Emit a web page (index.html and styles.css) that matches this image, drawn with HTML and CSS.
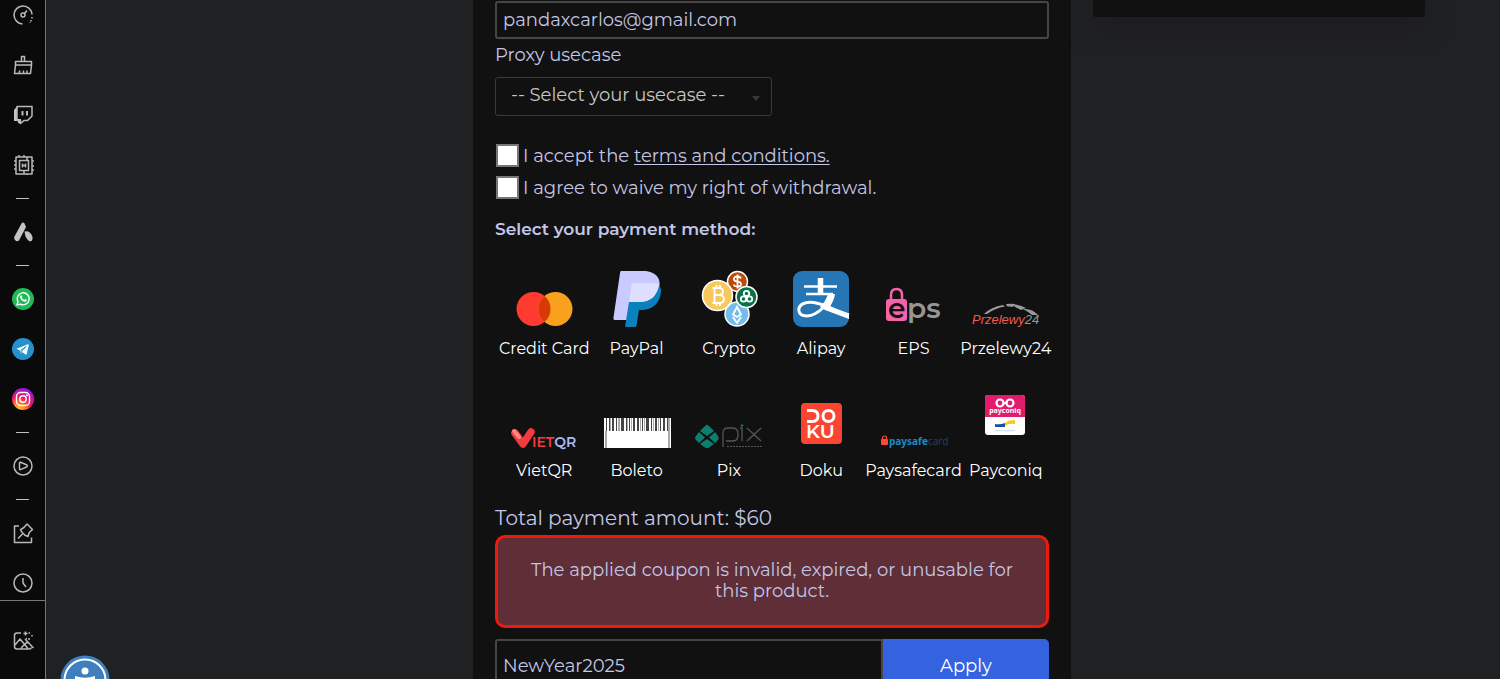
FILE: index.html
```html
<!DOCTYPE html>
<html lang="en">
<head>
<meta charset="utf-8">
<title>Checkout</title>
<link rel="stylesheet" href="styles.css">
</head>
<body>
<div class="app">
  <aside class="sidebar">
    <nav class="sidebar-list" aria-label="Browser tools">
      <button class="tool" aria-label="Speed"><svg viewBox="0 0 22 22"><path d="M10.500 20A9 9 0 1 1 20 10.500M20 13v1.500M19 16v1.500M18 18.500v.5M12.500 9.500 15 6.500"/><circle cx="11" cy="11" r="2"/></svg></button>
      <button class="tool" aria-label="Cleaner"><svg viewBox="0 0 22 22"><path d="M9.500 7V2.500h3V7M3.500 11V7.500h16V11M3.500 11h16L18.500 19.500h-16zM7 19.500l.8-3M11.500 19.500v-3M15 19.500v-3"/></svg></button>
      <button class="tool" aria-label="Twitch"><svg viewBox="0 0 22 22"><path class="fill" d="M2 6l3-3.500V15h4v5l-3-1v-2H2z"/><path d="M5 2.500h15V12l-4.500 4.500H12L8.500 19.500v-3H5z"/><path class="thick" d="M10.500 7v4.500M15 7v4.500"/></svg></button>
      <button class="tool" aria-label="Limiter"><svg viewBox="0 0 22 22"><path d="M4 3h16v17H4zM7.500 6.500h9v10h-9zM7 3V1M12 3V1M15 3v3.500M4 7H2M4 11H2M4 15H2M20 7h2M20 12h2M20 16h2M12 16.500V20M15 20v1"/><path d="M10.500 9.500v4M13.500 9.500v4M10.500 11.500h3"/></svg></button>
      <span class="dash"></span>
      <button class="tool" aria-label="Aria"><svg viewBox="0 0 22 22"><path class="fill" d="M9.500 2.500Q11 .5 12.500 2.500L14 6 7 19.500Q3.500 22 2 16.500z"/><path class="fill" d="M12.500 10.500q6-1 8 5.500.5 4-2.500 4.500-2.500-1-4.500-5z"/></svg></button>
      <span class="dash"></span>
      <button class="tool" aria-label="WhatsApp"><svg viewBox="0 0 22 22"><circle class="wa" cx="11" cy="11" r="11"/><path class="white-line" d="m5 17 .9-3.300a6 6 0 1 1 2.400 2.400z"/><path class="white" d="M8.500 7.500q1-1 1.800 1l-.5 1.200q.8 1.500 2.400 2.200l1-1q2 .6 1.500 1.800-1.200 1.600-3.300.6Q8.500 12 7.900 9.500q-.1-1.300.6-2"/></svg></button>
      <button class="tool" aria-label="Telegram"><svg viewBox="0 0 22 22"><circle class="tg" cx="11" cy="11" r="11"/><path class="white" d="m4.500 10.800 11.500-4.500q.9-.2.7.9l-2 9q-.4.800-1.200.3l-3-2.200-1.700 1.600-.6-3.200z"/><path class="tg-line" d="m8.500 12.500 5.500-4-4.200 4.500-.8 2.700"/></svg></button>
      <button class="tool" aria-label="Instagram"><svg viewBox="0 0 22 22"><defs><radialGradient id="ig" cx=".3" cy="1" r="1.050"><stop offset="0" stop-color="#ffd43b"/><stop offset=".3" stop-color="#ff7a22"/><stop offset=".58" stop-color="#ee1668"/><stop offset="1" stop-color="#8b16e8"/></radialGradient></defs><circle class="plain" fill="url(#ig)" cx="11" cy="11" r="11"/><rect class="white-line" x="4.500" y="4.500" width="13" height="13" rx="4"/><circle class="white-line" cx="11" cy="11" r="3.200"/><circle class="white" cx="15" cy="7.200" r="1"/></svg></button>
      <span class="dash"></span>
      <button class="tool" aria-label="Player"><svg viewBox="0 0 22 22"><circle cx="11" cy="11" r="9"/><path d="M7.500 8q0-1 1-.8l6 2.500q1.600 1.200 0 2.300l-6 2.600q-1 .2-1-1z"/></svg></button>
      <span class="dash"></span>
      <button class="tool" aria-label="Pinboards"><svg viewBox="0 0 22 22"><path d="M7 4H2.500v16.500h17v-5M12 5.500l3-3.500 5.500 5.500-3.300 3-1.200 4-3-1.200-3-3-1.500-2.600zM10.500 12 6 16.500"/></svg></button>
      <button class="tool" aria-label="History"><svg viewBox="0 0 22 22"><circle cx="11" cy="11" r="9"/><path d="M11 6v5l3 4"/></svg></button>
    </nav>
    <div class="sidebar-foot">
      <button class="tool" aria-label="Wallpaper"><svg viewBox="0 0 22 22"><path d="M9 3H5Q2.500 3 2.500 5.500v11Q2.500 19 5 19h12q2 0 2.500-1.500M16.500 3h1.500M20 5v1.500M13.500 1.500v4M11.500 3.500h4M17 8v2M14 8.500h1M3 15l5-6 8 9.500M9 18l5-5 2-1M13 9l8.500 9"/></svg></button>
    </div>
  </aside>

  <main class="page">
    <form class="checkout">
      <input class="field email" type="email" aria-label="Email" value="pandaxcarlos@gmail.com">
      <label class="label" for="usecase">Proxy usecase</label>
      <div class="select-wrap">
        <select class="select" id="usecase"><option>-- Select your usecase --</option></select>
      </div>

      <div class="checks">
        <div class="check"><input type="checkbox" id="terms"><label for="terms">I accept the <a href="#terms">terms and conditions.</a></label></div>
        <div class="check"><input type="checkbox" id="waive"><label for="waive">I agree to waive my right of withdrawal.</label></div>
      </div>

      <h2 class="heading">Select your payment method:</h2>
      <div class="methods">
        <button type="button" class="method">
          <svg viewBox="0 0 68 56"><circle cx="23.500" cy="38" r="17" fill="#ff3b31"/><circle cx="45.500" cy="38" r="17" fill="#f9a01e"/><path d="M34.500 25a17 17 0 0 1 0 26 17 17 0 0 1 0-26" fill="#d83a05"/></svg>
          <span>Credit Card</span></button>
        <button type="button" class="method">
          <svg viewBox="0 0 68 56"><path d="M18 0h22c12 0 19 7 16 17-2 9-9 14-19 14h-7l-3 18H12q-2 0-1.500-2.500L17 2q.3-2 1-2" fill="#c9caff"/><path d="M56 14q3 4 1.500 10c-2 10-10 15-19 15H36l-2.500 15.500Q33 56 31.500 56H23q-1 0-.8-1.500L26 31h11c10 0 17-6 19-17" fill="#0a80bd"/><path d="M30 12h15c6 0 11 0 11 2-2 11-9 17-19 17H26l2.500-17q.3-2 1.500-2" fill="#dedfff"/></svg>
          <span>PayPal</span></button>
        <button type="button" class="method">
          <svg viewBox="0 0 68 56"><g stroke="#fff" stroke-width="1.500"><circle cx="42" cy="43" r="12" fill="#74bdea"/><circle cx="42.500" cy="10.500" r="10" fill="#b94b0b"/><circle cx="51.500" cy="26" r="10.500" fill="#087346"/><circle cx="22.500" cy="24.500" r="15" fill="#f8c85c"/></g><g fill="none" stroke="#fff" stroke-width="1.800"><path d="M46 7.500q-1-2-3.500-2-4 .3-3.500 3 .5 2 3.500 2.200 4 .3 3.500 3-.5 2-3.500 2-3 0-4-2M42.500 3.500v14"/><circle cx="51.500" cy="22.500" r="2.700"/><circle cx="48.500" cy="28" r="2.700"/><circle cx="54.500" cy="28" r="2.700"/><path d="M17.500 17h7q3.500.3 3.500 3.500t-3.500 3.500h-5 5q4.500.3 4.500 4T25 32h-7.500M19.500 17v15M21.500 14v3M25 14v3M21.500 32v3M25 32v3"/><path d="m42 36-4 7.500 4 2.500 4-2.500zM38 46l4 6 4-6"/></g></svg>
          <span>Crypto</span></button>
        <button type="button" class="method">
          <svg viewBox="0 0 68 56"><rect x="6" width="56" height="56" rx="9" fill="#2676b5"/><g fill="none" stroke="#fff"><path d="M17 15.500h33M19 23h27" stroke-width="2.500"/><path d="M33.500 7v16" stroke-width="5.500"/><path d="M44 23c-3 11-13 21-24 22-10 0-11-10-2-13 11-3 24 5 44 12" stroke-width="3"/></g><path d="M41 23h7q-1 7-6 14l20 6v5l-24-9-5-3q6-6 8-13" fill="#fff"/></svg>
          <span>Alipay</span></button>
        <button type="button" class="method">
          <svg viewBox="0 0 68 56"><path d="M11 28v-4q0-6 5.500-6t5.500 6v4" fill="none" stroke="#f763aa" stroke-width="2.500"/><rect x="6" y="28" width="21" height="22" rx="3" fill="#f763aa"/><text x="8" y="47" class="logo-eps dark">e</text><text x="27" y="47" class="logo-eps grey">ps</text></svg>
          <span>EPS</span></button>
        <button type="button" class="method">
          <svg viewBox="0 0 68 56"><path d="M12 43q7-7 19-9l2 1.500Q23 37 15 43zM34 33q5-.7 9 0l-2 3-6-.8zM41 33q8 1 13 4l-5 2-6-3zM51 38q9-1 15 6h-6q-5-4-9-6" fill="#9a9a9a"/><text x="0" y="53" class="logo-p24">Przelewy<tspan class="grey">24</tspan></text></svg>
          <span>Przelewy24</span></button>
        <button type="button" class="method">
          <svg viewBox="0 0 68 56"><path d="m5 40 8 11 8-12" fill="none" stroke="#f23b3d" stroke-width="7.500" stroke-linecap="round" stroke-linejoin="round"/><path d="m4 38 5 6" stroke="#ff8780" stroke-width="4" stroke-linecap="round"/><text x="22" y="54" class="logo-viet">IET<tspan fill="#a9b9f5">QR</tspan></text></svg>
          <span>VietQR</span></button>
        <button type="button" class="method">
          <svg viewBox="0 0 68 56" shape-rendering="crispEdges"><path fill="#fff" d="M1 25h67v30H1z"/><path fill="#444" d="M3 25h1v13H3zM6 25h1v13H6zM9 25h2v13H9zM13 25h1v13h-1zM18 25h3v13h-3zM23 25h1v13h-1zM26 25h1v13h-1zM30 25h2v13h-2zM34 25h2v13h-2zM39 25h1v13h-1zM43 25h3v13h-3zM48 25h1v13h-1zM52 25h2v13h-2zM57 25h1v13h-1zM60 25h2v13h-2zM64 25h1v13h-1z"/><path fill="#aaa" d="M2 38h2v17H2zM65 25h2v30h-2zM7 25h1v13H7zM15 25h2v13h-2zM24 25h1v13h-1zM28 25h1v13h-1zM37 25h1v13h-1zM41 25h1v13h-1zM50 25h1v13h-1zM55 25h1v13h-1z"/></svg>
          <span>Boleto</span></button>
        <button type="button" class="method">
          <svg viewBox="0 0 68 56"><g fill="#0b8070"><path d="m9 34 3-2.500 3 2.500 4 4-7 5-7-5zM4 39l6 5.500L4 50l-3-3q-2-2 0-4zM20 39l-6 5.500 6 5.500 3-3q1.500-2 0-4zM12 46l7 5-5 3.500q-2 1.500-4 0L5 51z"/></g><g fill="none" stroke="#555" stroke-width="1.300"><path d="M28 54V40q0-5 5-5h5q5 0 5 6v1q0 6-5 6h-7M45 35h2v13M52 35l14 13M66 35 52 48"/><path d="M32 53.500h35" stroke-dasharray="2 1" stroke-width="1"/></g><path d="m47 31 1.500 1.500L47 34l-1.500-1.500z" fill="#0b8070"/></svg>
          <span>Pix</span></button>
        <button type="button" class="method">
          <svg viewBox="0 0 68 56"><rect x="14" y="10" width="41" height="41" rx="4" fill="#fb4532"/><g fill="none" stroke="#fff" stroke-width="3"><path d="M20 17.500h5q6 0 6 5.500t-6 5.500h-5"/><circle cx="41.500" cy="23" r="5.500"/></g><text x="19" y="45" class="logo-doku">KU</text></svg>
          <span>Doku</span></button>
        <button type="button" class="method">
          <svg viewBox="0 0 68 56"><path d="M2.500 47v-2q0-2 2-2t2 2v2" fill="none" stroke="#ff4935" stroke-width="1.200"/><rect x="1" y="46" width="7" height="6" rx="1" fill="#ff4935"/><text x="9" y="52" class="logo-safe">paysafe<tspan class="card">card</tspan></text></svg>
          <span>Paysafecard</span></button>
        <button type="button" class="method">
          <svg viewBox="0 0 68 56"><rect x="13" y="2" width="40" height="40" rx="3" fill="#fff"/><path d="M13 24V5q0-3 3-3h34q3 0 3 3v19z" fill="#e21c6d"/><g fill="none" stroke="#fff" stroke-width="2.200"><circle cx="28" cy="10" r="3.500"/><circle cx="38" cy="10" r="3.500"/><path d="m31 11 4-2"/></g><text x="33" y="20" class="logo-pq">payconiq</text><path d="M23 31q5 1 10-1v4H23z" fill="#1455a4"/><path d="M33 30q3-3 10-3v4q-6-1-10 2z" fill="#f8cb22"/><path d="M23 37.500h20" stroke="#d6e2f6" stroke-width="1.500"/></svg>
          <span>Payconiq</span></button>
      </div>

      <p class="total">Total payment amount: $60</p>
      <div class="alert" role="alert">The applied coupon is invalid, expired, or unusable for this product.</div>
      <div class="coupon">
        <input class="field" type="text" aria-label="Coupon code" value="NewYear2025">
        <button type="button" class="apply">Apply</button>
      </div>
    </form>
    <section class="summary" aria-label="Order summary"></section>
  </main>
  <button class="access" aria-label="Accessibility options"><svg viewBox="0 0 50 50"><circle cx="25" cy="25" r="24.500" fill="#3f7fbd"/><circle cx="25" cy="25" r="20.500" fill="#3f7fbd" stroke="#fff" stroke-width="2"/><circle cx="25" cy="16" r="3.500" fill="#fff"/><path d="M15 21q10 3.500 20 0v3q-4 1-6.500 1.500L30 40h-3l-2-9-2 9h-3l1.500-14.500Q19 25 15 24z" fill="#fff"/></svg></button>
</div>
</body>
</html>
```
FILE: styles.css
```css
* { box-sizing: border-box; }
body {
  margin: 0;
  background: #202123;
  color: #c3c6e6;
  font: 18px/24px Montserrat, Inter, sans-serif;
}
button, input, select { font: inherit; color: inherit; margin: 0; }
button { border: 0; padding: 0; background: none; cursor: pointer; }
.app { display: flex; height: 100vh; overflow: hidden; position: relative; }

.sidebar {
  display: flex;
  flex-direction: column;
  flex: none;
  width: 46px;
  background: #0a0a0a;
  border-right: 1px solid #77787a;
}
.sidebar-list { flex: 1; min-height: 0; overflow: hidden; }
.sidebar-list > :first-child { margin-top: -10px; }
.tool { display: flex; align-items: center; justify-content: center; width: 45px; height: 50px; }
.tool svg {
  width: 22px;
  height: 22px;
  fill: none;
  stroke: #b9b9b9;
  stroke-width: 1.5;
  stroke-linejoin: round;
}
.tool .fill { fill: #c4c4c4; stroke: none; }
.tool .thick { stroke-width: 2; }
.tool .plain { stroke: none; }
.tool .wa { fill: #20b957; stroke: none; }
.tool .tg { fill: #2591cd; stroke: none; }
.tool .tg-line { stroke: #2591cd; stroke-width: 1; }
.tool .white { fill: #fff; stroke: none; }
.tool .white-line { stroke: #fff; stroke-width: 1.4; }
.dash { display: flex; align-items: center; height: 17px; padding: 0 16px; }
.dash::before { content: ""; flex: 1; height: 1px; background: #c0c0c0; }
.sidebar-foot { display: flex; align-items: center; height: 79px; padding-top: 2px; border-top: 1px solid #77787a; }

.page {
  flex: 1;
  display: grid;
  grid-template-columns: 598fr 332fr;
  column-gap: 22px;
  align-items: start;
  padding: 0 5% 0 28.47%;
}
.checkout { padding: 1px 22px 24px; background: #111; min-width: 0; }
.field {
  display: block;
  width: 100%;
  height: 38px;
  padding: 0 6px;
  background: #111;
  border: 2px solid #464646;
  border-radius: 3px;
}
.label { display: block; padding: 4px 0 10px; }
.select-wrap { position: relative; width: 50%; }
.select-wrap::after {
  content: "";
  position: absolute;
  right: 12px;
  top: 19px;
  border: 4px solid transparent;
  border-top: 5px solid #3a3a3a;
  border-bottom: 0;
}
.select {
  appearance: none;
  display: block;
  width: 100%;
  height: 39px;
  padding: 0 15px 4px;
  color: #c6c6c6;
  background: #111;
  border: 1px solid #3a3a3a;
  border-radius: 3px;
}
.checks { padding-top: 24px; }
.check { display: flex; align-items: center; gap: 4px; height: 32px; padding-left: 1px; }
.check input {
  appearance: none;
  width: 23px;
  height: 23px;
  margin-bottom: 2px;
  background: #fff;
  border: 2px solid #767676;
}
.check a { color: inherit; text-underline-offset: 2px; }
.heading { margin: 13px 0 0; font-size: 17px; line-height: 24px; font-weight: 600; }

.methods {
  display: grid;
  grid-template-columns: repeat(6, minmax(0, 1fr));
  row-gap: 33px;
  margin: 30px -3px 0 3px;
}
.method {
  display: flex;
  flex-direction: column;
  align-items: center;
  gap: 11px;
  color: #fff;
  font-size: 16px;
  line-height: 22px;
  white-space: nowrap;
}
.method svg { width: 68px; height: 56px; overflow: visible; }
.grey { fill: #969696; }
.dark { fill: #111; }
.logo-eps { font: 600 28px Montserrat, sans-serif; }
.logo-p24 { font: italic 500 13px "Liberation Sans", sans-serif; fill: #f05a50; }
.logo-viet { font: 600 14px Montserrat, sans-serif; fill: #f23b3d; }
.logo-doku { font: 600 19px Montserrat, sans-serif; fill: #fff; }
.logo-safe { font: 700 10px "Noto Sans", sans-serif; fill: #168dc9; }
.logo-safe .card { font-weight: 400; fill: #1d435b; }
.logo-pq { font: 700 7px "Noto Sans", sans-serif; fill: #fff; text-anchor: middle; }

.total { margin: 24px 0 5px; font-size: 20px; line-height: 24px; }
.alert {
  padding: 22px 24px;
  min-height: 93px;
  text-align: center;
  line-height: 21px;
  background: #5f2e37;
  border: 3px solid #ed1b0d;
  border-radius: 10px;
}
.coupon { display: flex; margin-top: 11px; }
.coupon .field { flex: 0 0 70%; height: 53px; border-radius: 3px 0 0 3px; }
.apply { flex: 1; color: #fff; background: #3563e0; border-radius: 0 5px 5px 0; }

.summary {
  height: 17px;
  background: #111;
  border-radius: 0 0 3px 3px;
  box-shadow: 0 8px 28px #1b1b1d;
}
.access { position: absolute; left: 60px; bottom: -26px; width: 50px; height: 50px; }
.access svg { display: block; }
```
